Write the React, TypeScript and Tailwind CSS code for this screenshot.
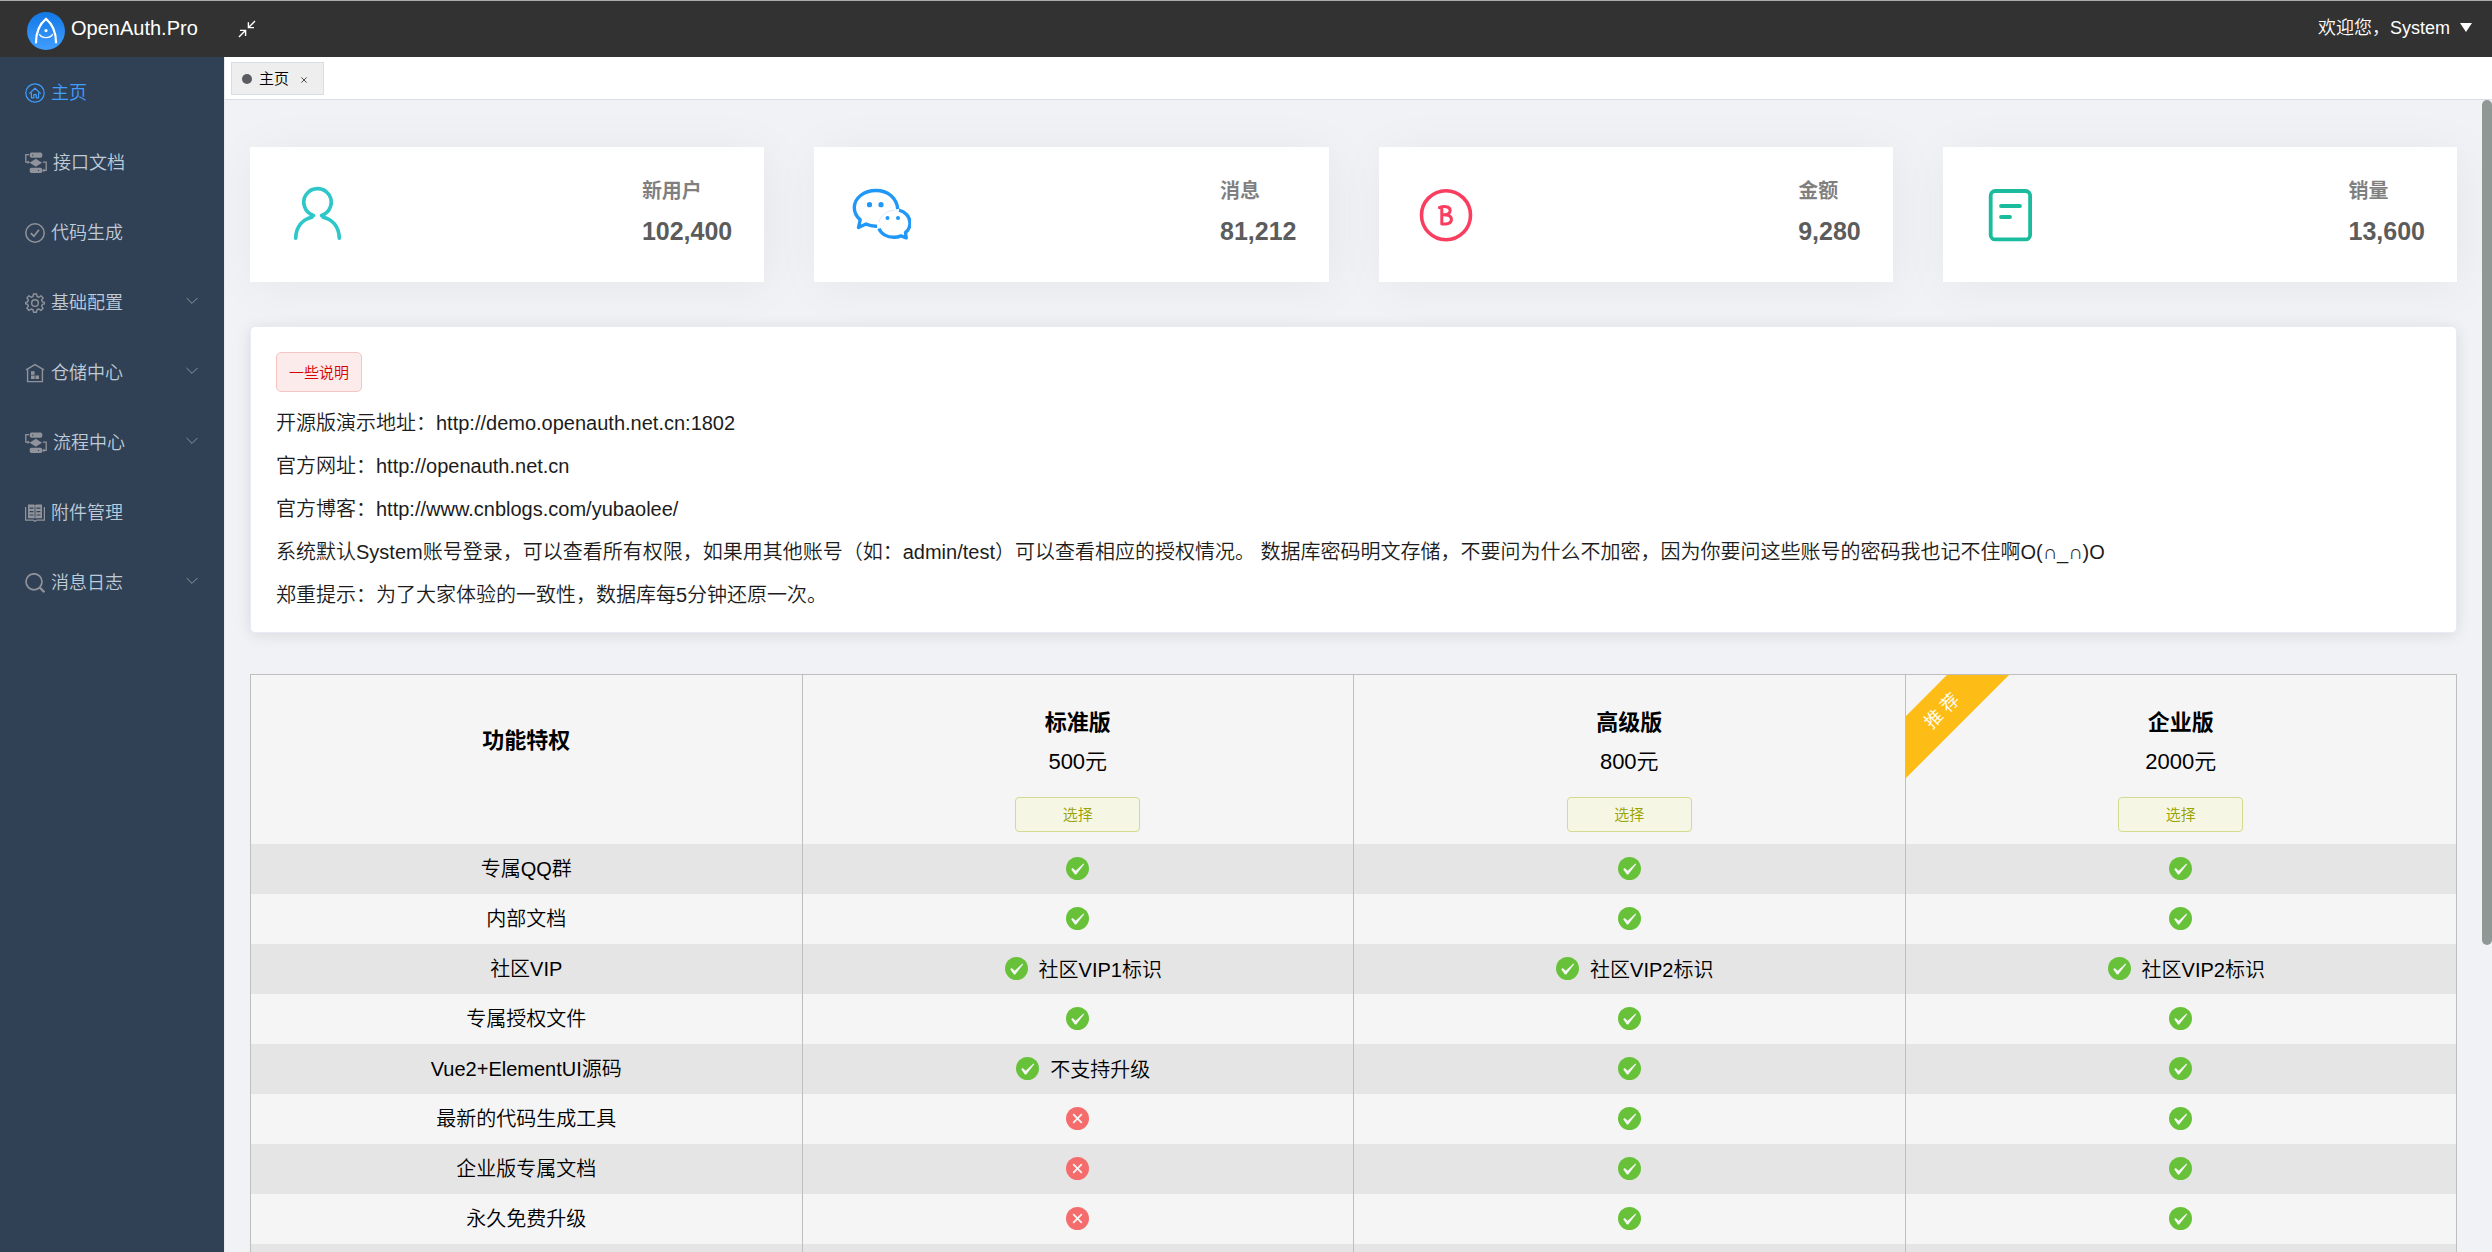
import React, { ReactNode } from "react";

/* ---------- sidebar icons ---------- */

function HomeIcon() {
  return (
    <svg viewBox="0 0 20 20" className="h-5 w-5" fill="none" stroke="currentColor" strokeWidth="1.2">
      <circle cx="10" cy="10" r="9.2" />
      <path d="M4.6 10.400 10 5.200l5.400 5.200" strokeLinecap="round" strokeLinejoin="round" />
      <path d="M6.400 9.600v5.200h2.400v-3.200h2.400v3.200h2.400v-5.200" strokeLinejoin="round" />
    </svg>
  );
}

function FlowIcon() {
  return (
    <svg viewBox="0 0 22 22" className="h-[22px] w-[22px]" fill="currentColor">
      <path fillRule="evenodd" d="M6.500 .6h9a1.800 1.800 0 0 1 1.800 1.800v1.600a1.800 1.800 0 0 1-1.800 1.800h-9A1.800 1.800 0 0 1 4.700 4V2.400A1.800 1.800 0 0 1 6.500 .6Zm.6 2.100v1h1.200v-1H7.100Z" />
      <path d="M10.800 6.800 17 10.800l-6.200 4-6.200-4 6.200-4Z" />
      <path fillRule="evenodd" d="M6.500 15.800h9a1.800 1.800 0 0 1 1.800 1.800v1.600a1.800 1.800 0 0 1-1.800 1.800h-9a1.800 1.800 0 0 1-1.800-1.800v-1.600a1.800 1.800 0 0 1 1.800-1.800Zm6.400 2.100v1h1.200v-1h-1.200Z" />
      <path d="M4 2.600H.8v7.600h2.400M17.800 10.200h3.400v8.200h-2.800" fill="none" stroke="currentColor" strokeWidth="1.300" />
      <path d="M2.600 8.400 5 10.200l-2.400 1.800ZM19.400 16.600 17 18.400l2.400 1.800Z" />
    </svg>
  );
}

function CheckRingIcon() {
  return (
    <svg viewBox="0 0 20 20" className="h-5 w-5" fill="none" stroke="currentColor" strokeWidth="1.500">
      <circle cx="10" cy="10" r="9.200" />
      <path d="M5.800 10.200 8.900 13.200 14 6.800" strokeWidth="1.700" />
    </svg>
  );
}

function GearIcon() {
  return (
    <svg viewBox="0 0 24 24" className="h-5 w-5" fill="none" stroke="currentColor" strokeWidth="1.700" strokeLinejoin="round">
      <circle cx="12" cy="12" r="4" />
      <path d="M10.200 1.200h3.600l.7 3.100 2 .8 2.700-1.700 2.500 2.500-1.700 2.700.8 2 2.700.7v1.600l-2.700.8-.8 2 1.700 2.700-2.500 2.500-2.700-1.700-2 .8-.7 3h-3.600l-.7-3-2-.8-2.700 1.700-2.500-2.500L4 15.700l-.8-2-2.400-.8v-1.600l2.400-.7.8-2-1.700-2.700 2.500-2.500 2.700 1.700 2-.8.700-3.100Z" />
    </svg>
  );
}

function WarehouseIcon() {
  return (
    <svg viewBox="0 0 20 20" className="h-5 w-5" fill="none" stroke="currentColor" strokeWidth="1.400">
      <path d="M1.400 6.600 10 1.600l8.600 5" strokeLinecap="round" />
      <path d="M2.600 6.400v12.200h14.800V6.400" />
      <path d="M6 8.200h3.600v3.600H6zM6 12.400h3.600V16H6zM10.400 12.400H14V16h-3.600z" fill="currentColor" stroke="none" />
    </svg>
  );
}

function BookIcon() {
  return (
    <svg viewBox="0 0 20 20" className="h-5 w-5" fill="currentColor">
      <path d="M.6 4v13.200h7.600l1.800 1 1.800-1h7.600V4" fill="none" stroke="currentColor" strokeWidth="1.300" />
      <path
        fillRule="evenodd"
        d="M3 1.600h6L10 2.600l1-1h6v13.600H3V1.600Zm1.600 3v1.200h3.800V4.600H4.600Zm0 3.400v1.200h3.800V8H4.600Zm0 3.400v1.200h3.800v-1.200H4.600Zm7-6.800v1.200h3.800V4.600h-3.800Zm0 3.400v1.200h3.800V8h-3.800Zm0 3.400v1.200h3.800v-1.200h-3.800ZM9.600 3.600v11h.8v-11h-.8Z"
      />
    </svg>
  );
}

function SearchIcon() {
  return (
    <svg viewBox="0 0 20 20" className="h-5 w-5" fill="none" stroke="currentColor" strokeWidth="1.700">
      <circle cx="9" cy="8.800" r="8" />
      <path d="m14.800 14.600 4.600 4.600" strokeWidth="2.200" />
    </svg>
  );
}

function ChevronDown() {
  return (
    <svg viewBox="0 0 12 8" className="h-2 w-3" fill="none" stroke="#909399" strokeWidth="1">
      <path d="m.6 1 5.400 5.400L11.400 1" />
    </svg>
  );
}

/* ---------- header drawings ---------- */

function Logo() {
  return (
    <svg viewBox="0 0 38 38" className="h-[38px] w-[38px]" fill="none">
      <defs>
        <linearGradient id="logo" x1="0" y1="0" x2="0" y2="1">
          <stop offset="0" stopColor="#1278e6" />
          <stop offset="1" stopColor="#409eff" />
        </linearGradient>
      </defs>
      <circle cx="19" cy="19" r="19" fill="url(#logo)" />
      <path d="M9 30.500C9 20.500 12 12.500 19 6.800c7 5.700 10 13.700 10 23.700" stroke="#fff" strokeWidth="2.200" strokeLinecap="round" />
      <path d="M12.600 22.600c1.400 2.200 3.800 3 6.400 3s5-.8 6.400-3" stroke="#fff" strokeWidth="1.400" strokeLinecap="round" />
      <circle cx="19" cy="18.600" r="1.600" fill="#fff" />
    </svg>
  );
}

function CollapseIcon() {
  return (
    <svg viewBox="0 0 18 18" className="h-[18px] w-[18px]" fill="none" stroke="#fff" strokeWidth="1.400">
      <path d="M17 1 10.600 7.400M10.400 2.200v5.400H16" />
      <path d="m1 17 6.400-6.400M2 10.400h5.600V16" />
    </svg>
  );
}

/* ---------- summary card icons ---------- */

function PersonIcon() {
  return (
    <svg viewBox="0 0 60 60" className="h-[60px] w-[60px]" fill="none" stroke="#2ec7c9" strokeWidth="3.600" strokeLinecap="round">
      <path d="M26.500 30.400a13.700 13.700 0 1 1 8 0" />
      <path d="M8.700 53.200c.3-11.400 6.700-19 16.300-21M52.300 53.200c-.3-11.400-6.700-19-16.300-21" />
    </svg>
  );
}

function MessageIcon() {
  return (
    <svg viewBox="0 0 60 60" className="h-[60px] w-[60px]" fill="none" stroke="#2198f7" strokeWidth="3.400" strokeLinejoin="round">
      <path d="M26 41.200c-4 .2-7.600-.6-11-2.200l-7.500 3.500 1.700-7.600C5.400 31.600 3.300 27.400 3.300 22.600 3.300 13.100 12.800 5.500 25 5.500c11.600 0 20.800 7.200 21.700 18.700" />
      <path d="M28 43.500c1.800 5.300 7.800 8.800 15 8.800 2.800 0 5-.5 7-1.400l5.200 1.900-.7-5.200c2.900-2.400 4.500-6 4.500-9.600 0-6-4.600-11.200-11-12.800" />
      <path d="M28 37c1.400-6.400 7.600-11.400 16-11.800" stroke="#d8eafc" strokeWidth="1" />
      <g fill="#2198f7" stroke="none">
        <circle cx="18.500" cy="19.700" r="2.600" />
        <circle cx="30" cy="19.700" r="2.600" />
        <circle cx="36.500" cy="33" r="2" />
        <circle cx="47" cy="33" r="2" />
      </g>
    </svg>
  );
}

function CoinIcon() {
  return (
    <svg viewBox="0 0 60 60" className="h-[60px] w-[60px]" fill="none" stroke="#f93e60" strokeWidth="3.600" strokeLinecap="round" strokeLinejoin="round">
      <circle cx="30" cy="30.200" r="24.500" />
      <path d="M23.400 22.600c3.600-1.600 10.800-1.800 10.800 2.800 0 3.200-3 4.400-7.800 4.400 5.600-.2 9 1 9 4.600 0 4-4.400 4.800-9.600 4.600V22.600" strokeWidth="3" />
    </svg>
  );
}

function DocIcon() {
  return (
    <svg viewBox="0 0 60 60" className="h-[60px] w-[60px]" fill="none" stroke="#1bbc9d" strokeLinecap="round">
      <rect x="10.700" y="6" width="39.400" height="48.400" rx="4.500" strokeWidth="3.800" />
      <path d="M21 21h19M21 32h9" strokeWidth="3.800" />
    </svg>
  );
}

/* ---------- table marks ---------- */

function YesIcon() {
  return (
    <svg viewBox="0 0 25 25" className="h-[25px] w-[25px]" role="img" aria-label="支持">
      <circle cx="12.500" cy="12.500" r="11.500" fill="#67c23a" />
      <path d="m6.200 13.200 1.500-1.100 3 2.600 7.800-7.300.7.800-8 10.400-1.300-.2-3.700-5.200Z" fill="#f5f5f5" />
    </svg>
  );
}

function NoIcon() {
  return (
    <svg viewBox="0 0 25 25" className="h-[25px] w-[25px]" role="img" aria-label="不支持">
      <circle cx="12.500" cy="12.500" r="11.500" fill="#f56c6c" />
      <path d="m8.200 8.200 8.600 8.600m0-8.600-8.600 8.600" stroke="#f5f5f5" strokeWidth="1.800" />
    </svg>
  );
}

/* ---------- data ---------- */

type MenuItem = { label: string; icon: ReactNode; active?: boolean; group?: boolean };

const menu: MenuItem[] = [
  { label: "主页", icon: <HomeIcon />, active: true },
  { label: "接口文档", icon: <FlowIcon /> },
  { label: "代码生成", icon: <CheckRingIcon /> },
  { label: "基础配置", icon: <GearIcon />, group: true },
  { label: "仓储中心", icon: <WarehouseIcon />, group: true },
  { label: "流程中心", icon: <FlowIcon />, group: true },
  { label: "附件管理", icon: <BookIcon /> },
  { label: "消息日志", icon: <SearchIcon />, group: true },
];

const cards = [
  { label: "新用户", value: "102,400", icon: <PersonIcon /> },
  { label: "消息", value: "81,212", icon: <MessageIcon /> },
  { label: "金额", value: "9,280", icon: <CoinIcon /> },
  { label: "销量", value: "13,600", icon: <DocIcon /> },
];

const plans = [
  { name: "标准版", price: "500元" },
  { name: "高级版", price: "800元" },
  { name: "企业版", price: "2000元", recommended: true },
];

type Cell = { ok: boolean; note?: string };
const yes: Cell = { ok: true };
const no: Cell = { ok: false };

const rows: { name: string; cells: Cell[] }[] = [
  { name: "专属QQ群", cells: [yes, yes, yes] },
  { name: "内部文档", cells: [yes, yes, yes] },
  {
    name: "社区VIP",
    cells: [
      { ok: true, note: "社区VIP1标识" },
      { ok: true, note: "社区VIP2标识" },
      { ok: true, note: "社区VIP2标识" },
    ],
  },
  { name: "专属授权文件", cells: [yes, yes, yes] },
  { name: "Vue2+ElementUI源码", cells: [{ ok: true, note: "不支持升级" }, yes, yes] },
  { name: "最新的代码生成工具", cells: [no, yes, yes] },
  { name: "企业版专属文档", cells: [no, yes, yes] },
  { name: "永久免费升级", cells: [no, yes, yes] },
];

/* ---------- page parts ---------- */

function Header() {
  return (
    <header className="flex h-[57px] shrink-0 items-center border-t border-[#a9aca9] bg-[#323232] text-white">
      <div className="flex items-center pt-1 pl-[27px]">
        <Logo />
        <span className="ml-1.5 pb-1.5 text-xl">OpenAuth.Pro</span>
      </div>
      <button type="button" aria-label="收起菜单" className="ml-10">
        <CollapseIcon />
      </button>
      <button type="button" className="mr-5 ml-auto flex items-center gap-2.5 pb-[3px] text-lg">
        欢迎您，System
        <svg viewBox="0 0 12 9" className="h-[9px] w-3" fill="#fff">
          <path d="M0 0h12L6 9Z" />
        </svg>
      </button>
    </header>
  );
}

function Sidebar() {
  return (
    <nav className="w-[225px] shrink-0 border-r border-[#e6e9ee] bg-[#304156]">
      <ul>
        {menu.map((item) => (
          <li key={item.label}>
            <a
              href="#"
              className={
                item.active
                  ? "flex h-[70px] items-center gap-1.5 pr-[26px] pl-[25px] text-[#409eff]"
                  : "flex h-[70px] items-center gap-1.5 pr-[26px] pl-[25px] text-[#bfcbd9]"
              }
            >
              <span className={item.active ? "pt-0.5" : "pt-0.5 text-[#909399]"}>{item.icon}</span>
              <span className="pt-0.5 text-lg">{item.label}</span>
              {item.group && (
                <span className="ml-auto pb-0.5">
                  <ChevronDown />
                </span>
              )}
            </a>
          </li>
        ))}
      </ul>
    </nav>
  );
}

function TabBar() {
  return (
    <div className="flex h-[43px] shrink-0 items-start border-b border-[#d8dce5] bg-white pt-[5px] pl-1.5">
      <div className="flex h-[33px] items-center border border-[#d8dce5] bg-[#eeeeee] px-2.5">
        <span className="h-2.5 w-2.5 rounded-full bg-[#5a5c60]" />
        <span className="ml-[7px] pt-0.5 text-[15px] text-black">主页</span>
        <button type="button" aria-label="关闭" className="mt-[3px] mr-1.5 ml-3">
          <svg viewBox="0 0 6 6" className="h-1.5 w-1.5" stroke="#222" strokeWidth="0.8" fill="none">
            <path d="m.4.400 5.200 5.200m0-5.200L.4 5.600" />
          </svg>
        </button>
      </div>
    </div>
  );
}

function Cards() {
  return (
    <section className="grid grid-cols-4 gap-[50px]">
      {cards.map((c) => (
        <div
          key={c.label}
          className="flex h-[135px] items-start justify-between bg-white pt-8 pr-8 pl-[37px] shadow-[4px_4px_50px_rgba(0,0,0,0.05)]"
        >
          <div className="pt-1.5">{c.icon}</div>
          <div className="font-bold">
            <div className="text-xl leading-6 text-black/50">{c.label}</div>
            <div className="mt-3.5 text-[25px] leading-7 text-[#5c5c5c]">{c.value}</div>
          </div>
        </div>
      ))}
    </section>
  );
}

function Notes() {
  return (
    <section className="mt-11 flex flex-col items-start gap-5 rounded-[5px] border border-[#e6ebf5] bg-white p-[25px] text-xl leading-[23px] text-[#1c1c1c] shadow-[0_2px_15px_rgba(0,0,0,0.1)]">
      <button
        type="button"
        className="h-10 rounded-[5px] border border-[#f7c4c4] bg-[#fbebeb] px-3 text-[15px] text-[#d80000]"
      >
        一些说明
      </button>
      <p>开源版演示地址：http://demo.openauth.net.cn:1802</p>
      <p>官方网址：http://openauth.net.cn</p>
      <p>官方博客：http://www.cnblogs.com/yubaolee/</p>
      <p>
        系统默认System账号登录，可以查看所有权限，如果用其他账号（如：admin/test）可以查看相应的授权情况。
        数据库密码明文存储，不要问为什么不加密，因为你要问这些账号的密码我也记不住啊O(∩_∩)O
      </p>
      <p>郑重提示：为了大家体验的一致性，数据库每5分钟还原一次。</p>
    </section>
  );
}

function PlanTable() {
  return (
    <table className="mt-[41px] w-full table-fixed border-collapse border border-[#bfbfbf] text-center text-xl text-black">
      <thead>
        <tr className="h-[169px] bg-[#f5f5f5]">
          <th scope="col" className="pb-9 text-[22px] font-bold">
            功能特权
          </th>
          {plans.map((p) => (
            <th key={p.name} scope="col" className="relative overflow-hidden border-l border-[#bfbfbf] pt-4 align-middle font-[350]">
              {p.recommended && (
                <span className="absolute top-[14px] -left-16 flex h-11 w-[200px] -rotate-45 items-center justify-center bg-[#febd16] text-lg text-white">
                  推 荐
                </span>
              )}
              <div className="text-[22px] leading-[39px] font-bold">{p.name}</div>
              <div className="text-[22px] leading-[39px]">{p.price}</div>
              <button
                type="button"
                className="mt-4 h-[35px] w-[125px] rounded-[4px] border border-[#d3da8f] bg-[#f6f6e4] text-[15px] text-[#99a300]"
              >
                选择
              </button>
            </th>
          ))}
        </tr>
      </thead>
      <tbody>
        {rows.map((r) => (
          <tr key={r.name} className="h-[50px] odd:bg-[#e5e5e5] even:bg-[#f5f5f5]">
            <th scope="row" className="font-[350]">
              {r.name}
            </th>
            {r.cells.map((c, i) => (
              <td key={i} className="border-l border-[#bfbfbf]">
                <div className="flex items-center justify-center">
                  <span className="mx-2.5">{c.ok ? <YesIcon /> : <NoIcon />}</span>
                  {c.note && <span className="pt-0.5">{c.note}</span>}
                </div>
              </td>
            ))}
          </tr>
        ))}
        <tr className="h-[50px] bg-[#e5e5e5]">
          <th />
          <td className="border-l border-[#bfbfbf]" />
          <td className="border-l border-[#bfbfbf]" />
          <td className="border-l border-[#bfbfbf]" />
        </tr>
      </tbody>
    </table>
  );
}

export default function App() {
  return (
    <div className='flex h-screen flex-col overflow-hidden font-["Liberation_Sans","Noto_Sans_CJK_SC",sans-serif] font-[350]'>
      <Header />
      <div className="flex min-h-0 flex-1">
        <Sidebar />
        <main className="flex min-w-0 flex-1 flex-col">
          <TabBar />
          <div className="relative min-h-0 flex-1">
            <div className="h-full overflow-y-auto bg-[#f0f2f6] pt-[47px] pr-[35px] pb-12 pl-[25px] [scrollbar-width:none]">
              <Cards />
              <Notes />
              <PlanTable />
            </div>
            <div className="absolute top-0 right-0 h-11/15 w-2.5 rounded-full bg-[#909896]" />
          </div>
        </main>
      </div>
    </div>
  );
}
